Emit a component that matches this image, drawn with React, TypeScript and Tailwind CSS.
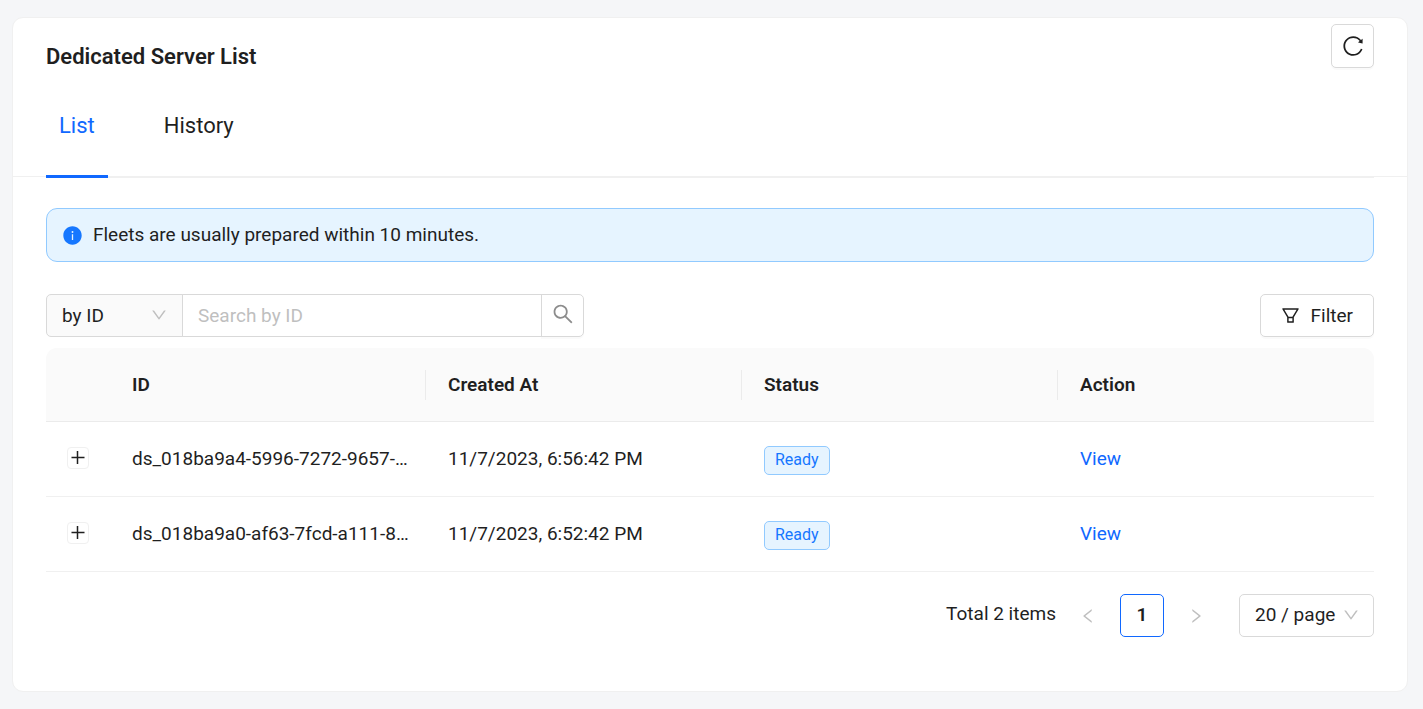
import { useState } from "react";
import {
  AiFillInfoCircle,
  AiOutlineDown,
  AiOutlineFilter,
  AiOutlineLeft,
  AiOutlineReload,
  AiOutlineRight,
  AiOutlineSearch,
} from "react-icons/ai";

const servers = [
  { id: "ds_018ba9a4-5996-7272-9657-…", createdAt: "11/7/2023, 6:56:42 PM", status: "Ready" },
  { id: "ds_018ba9a0-af63-7fcd-a111-8…", createdAt: "11/7/2023, 6:52:42 PM", status: "Ready" },
];

const columns = ["ID", "Created At", "Status", "Action"];
const tabs = ["List", "History"];

function Header({ tab, onChange }: { tab: string; onChange: (t: string) => void }) {
  return (
    <header className="border-b border-[#f0f0f0] px-[33px]">
      <div className="flex items-start justify-between pt-1.5">
        <h1 className="pt-[17px] text-[22px] leading-8 font-semibold">Dedicated Server List</h1>
        <button
          aria-label="Reload"
          className="flex h-11 w-[43px] items-center justify-center rounded-[5px] border border-[#d9d9d9] bg-white shadow-[0_2px_0_rgba(0,0,0,0.02)]"
        >
          <AiOutlineReload size={24} />
        </button>
      </div>

      {/* Tabs */}
      <div role="tablist" className="-mb-0.5 flex gap-[43px] border-b-2 border-[#f0f0f0] pt-5">
        {tabs.map((t) => (
          <button
            key={t}
            role="tab"
            aria-selected={t === tab}
            onClick={() => onChange(t)}
            className={`-mb-0.5 border-b-3 px-[13px] pt-[17px] pb-[33px] text-[22px] leading-8 ${
              t === tab ? "border-[#1068ff] text-[#1068ff]" : "border-transparent"
            }`}
          >
            {t}
          </button>
        ))}
      </div>
    </header>
  );
}

function Toolbar() {
  return (
    <div className="mt-8 flex justify-between">
      <div className="flex h-[43px] w-[538px]">
        <div className="relative w-[137px]">
          <select
            aria-label="Search field"
            className="h-full w-full appearance-none rounded-l-[5px] border border-[#d9d9d9] bg-[#fafafa] pl-[15px]"
          >
            <option>by ID</option>
          </select>
          <AiOutlineDown size={18} className="pointer-events-none absolute top-3 right-[15px] text-[#bfbfbf]" />
        </div>
        <input
          type="text"
          aria-label="Search by ID"
          placeholder="Search by ID"
          className="-ml-px min-w-0 flex-1 border border-[#d9d9d9] px-[15px] placeholder:text-[#bfbfbf]"
        />
        <button
          aria-label="Search"
          className="-ml-px flex w-[43px] items-center justify-center rounded-r-[5px] border border-[#d9d9d9] pb-1 text-[#8c8c8c] shadow-[0_2px_0_rgba(0,0,0,0.02)]"
        >
          <AiOutlineSearch size={24} />
        </button>
      </div>

      <button className="flex h-[43px] items-center gap-2.5 rounded-[5px] border border-[#d9d9d9] pr-5 pl-[19px] shadow-[0_2px_0_rgba(0,0,0,0.02)]">
        <AiOutlineFilter size={21} />
        Filter
      </button>
    </div>
  );
}

function ServerTable() {
  return (
    <table className="mt-[11px] w-full table-fixed border-separate border-spacing-0 text-left">
      <thead>
        <tr className="h-[74px]">
          <th className="w-16 rounded-tl-[11px] border-b border-[#ebebeb] bg-[#fafafa]" />
          {columns.map((col) => (
            <th
              key={col}
              className="border-b border-[#ebebeb] bg-[#fafafa] p-0 font-semibold last:rounded-tr-[11px] [&:last-child>div]:border-r-0"
            >
              <div className="h-[30px] border-r border-[#ebebeb] px-[22px] leading-[30px]">{col}</div>
            </th>
          ))}
        </tr>
      </thead>
      <tbody>
        {servers.map((server) => (
          <tr key={server.id} className="h-[75px]">
            <td className="border-b border-[#f0f0f0] p-0">
              <button
                aria-label="Expand row"
                className="mx-auto mb-0.5 flex size-[22px] items-center justify-center rounded border border-[#f0f0f0] bg-white"
              >
                <svg viewBox="0 0 14 14" className="size-3.5" stroke="currentColor" strokeWidth="1.5">
                  <path d="M.5 6.5h13M6.5 0v13" />
                </svg>
              </button>
            </td>
            <td className="border-b border-[#f0f0f0] py-0 pl-[22px] whitespace-nowrap">{server.id}</td>
            <td className="border-b border-[#f0f0f0] px-[22px] py-0">{server.createdAt}</td>
            <td className="border-b border-[#f0f0f0] px-[22px] py-0">
              <span className="mt-0.5 block h-[29px] w-fit rounded-[5px] border border-[#91caff] bg-[#e6f4ff] px-2.5 text-base leading-[26px] text-[#1677ff]">
                {server.status}
              </span>
            </td>
            <td className="border-b border-[#f0f0f0] px-[22px] py-0">
              <a href="#" className="text-[#1068ff]">
                View
              </a>
            </td>
          </tr>
        ))}
      </tbody>
    </table>
  );
}

function Pagination() {
  return (
    <nav aria-label="Pagination" className="mt-[22px] flex h-[43px] items-center justify-end">
      <span className="mr-2.5 pb-1">Total 2 items</span>
      <button disabled aria-label="Previous page" className="mr-[11px] flex size-[43px] items-center justify-center text-[#bfbfbf]">
        <AiOutlineLeft size={18} />
      </button>
      <button className="mr-2.5 h-[43px] w-11 rounded-[5px] border border-[#1068ff] pb-0.5 font-semibold">1</button>
      <button disabled aria-label="Next page" className="mr-[22px] flex size-[43px] items-center justify-center text-[#bfbfbf]">
        <AiOutlineRight size={18} />
      </button>
      <div className="relative h-full w-[135px]">
        <select
          aria-label="Page size"
          className="h-full w-full appearance-none rounded-[5px] border border-[#d9d9d9] bg-white pb-0.5 pl-[15px]"
        >
          <option>20 / page</option>
        </select>
        <AiOutlineDown size={18} className="pointer-events-none absolute top-3 right-3.5 text-[#bfbfbf]" />
      </div>
    </nav>
  );
}

export default function App() {
  const [tab, setTab] = useState("List");

  return (
    <div className="min-h-screen bg-[#f5f6f8] pt-[17px] pr-[15px] pb-[17px] pl-3 font-['Roboto',sans-serif] text-[19px] leading-[30px] text-[#1f1f1f]">
      <main className="rounded-[11px] border border-[#f0f0f0] bg-white">
        <Header tab={tab} onChange={setTab} />

        <div className="px-[33px] pt-[31px] pb-[54px]">
          {/* Notice */}
          <div
            role="alert"
            className="flex h-[54px] items-center gap-2.5 rounded-[11px] border border-[#91caff] bg-[#e6f4ff] px-[15px]"
          >
            <AiFillInfoCircle size={21} className="text-[#1677ff]" />
            <span className="pb-px">Fleets are usually prepared within 10 minutes.</span>
          </div>

          <Toolbar />
          <ServerTable />
          <Pagination />
        </div>
      </main>
    </div>
  );
}
